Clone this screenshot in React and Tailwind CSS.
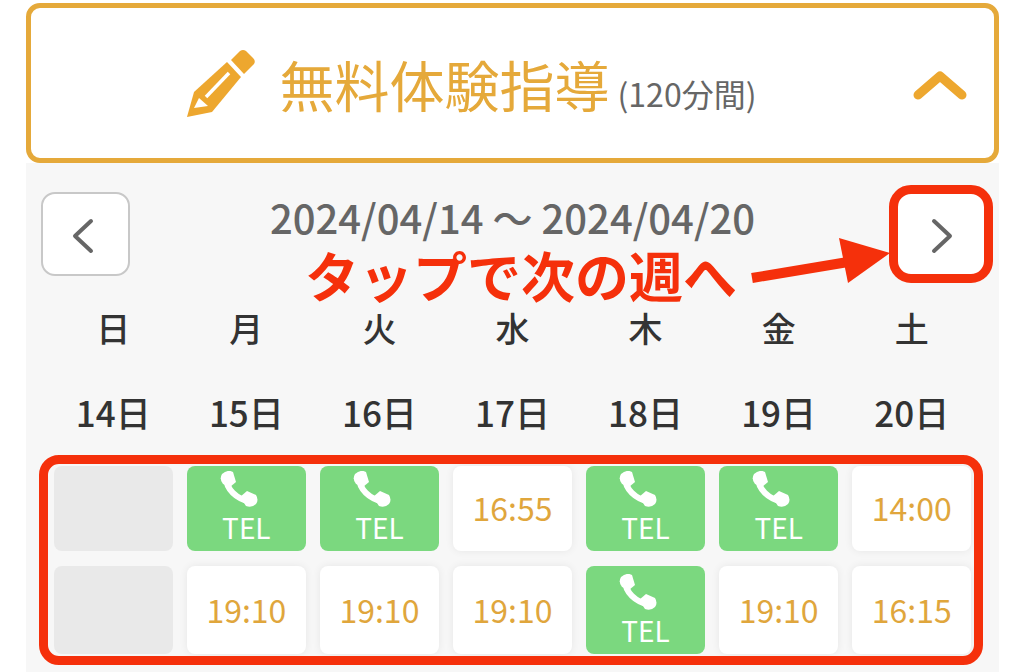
const JP = "font-['Noto_Sans_CJK_JP','Noto_Sans',sans-serif]";

const WEEK = ['日', '月', '火', '水', '木', '金', '土'];
const DATES = ['14日', '15日', '16日', '17日', '18日', '19日', '20日'];
const ROWS = [
  ['', 'TEL', 'TEL', '16:55', 'TEL', 'TEL', '14:00'],
  ['', '19:10', '19:10', '19:10', 'TEL', '19:10', '16:15'],
];

function PencilIcon() {
  return (
    <svg width="70" height="70" viewBox="0 0 70 70" className="mr-[23px] mt-[1px] shrink-0">
      <path d="M44 11 L53 2 Q56 0 59 2 L66 9 Q69 12 67 15 L57 25 Z" fill="#eda72f" />
      <path d="M40 13 L54 28 L25 63 L0 68 L7 43 Z" fill="#eda72f" />
      <path d="M19 48 L42 24" stroke="#fff" strokeWidth="3.5" />
      <path d="M7 59 L12 49 L21 57 Z" fill="#fff" />
    </svg>
  );
}

function PhoneIcon() {
  return (
    <svg width="38" height="36" viewBox="0 0 38 36" className="mb-[5px] -ml-[15px] shrink-0">
      <path d="M6 6 C6 18 16 28 31 31" fill="none" stroke="#fff" strokeWidth="6" strokeLinecap="round" />
      <path d="M2 3 Q8 -2 13 1 L16 11 L10 16 L3 13 Q-1 8 2 3 Z" fill="#fff" />
      <path d="M20 26 L27 20 L36 24 Q39 29 36 33 Q32 37 26 35 Z" fill="#fff" />
    </svg>
  );
}

function Chevron({ dir }) {
  return (
    <svg width="24" height="36" viewBox="0 0 24 36" className={dir === 'left' ? '-ml-[6px] mt-[4px]' : 'ml-[6px] mt-[4px]'}>
      <path
        d={dir === 'left' ? 'M20 3 L4 18 L20 33' : 'M4 3 L20 18 L4 33'}
        fill="none"
        stroke="#666"
        strokeWidth="4"
        strokeLinecap="round"
        strokeLinejoin="round"
      />
    </svg>
  );
}

function Cell({ value }) {
  if (value === '') return <div className="rounded-lg bg-[#e9e9e9]" />;
  if (value === 'TEL') {
    return (
      <div className="flex flex-col items-center justify-end rounded-lg bg-[#7bd87f] pb-[9px] text-white">
        <PhoneIcon />
        <span className="text-[28px] leading-[30px]">TEL</span>
      </div>
    );
  }
  return (
    <div className="flex items-center justify-center rounded-lg bg-white pb-[3px] text-[32px] text-[#e0a63c] shadow-[0_0_8px_rgba(0,0,0,0.07)]">
      {value}
    </div>
  );
}

export default function App() {
  return (
    <div className={`h-[672px] w-[1024px] overflow-hidden bg-white pl-[26px] pt-[3px] ${JP}`}>
      <div className="w-[973px]">
        {/* header */}
        <div className="relative flex h-[160px] items-center justify-center rounded-[14px] border-[5px] border-[#e5a93a] bg-white">
          <div className="flex items-center pr-[82px]">
            <PencilIcon />
            <span className="text-[55px] leading-none text-[#e5a93a]">無料体験指導</span>
            <span className="ml-[8px] mt-[20px] text-[32px] leading-none text-[#666]">(120分間)</span>
          </div>
          <svg width="56" height="34" viewBox="0 0 56 34" className="absolute right-[26px] top-[60px]">
            <path d="M6 27 L28 8 L50 27" fill="none" stroke="#eda72f" strokeWidth="9" strokeLinecap="round" strokeLinejoin="round" />
          </svg>
        </div>

        {/* calendar */}
        <div className="relative h-[509px] bg-[#f7f7f7] px-[28px] pt-[29px]">
          <div className="-mx-[13px] flex h-[84px] items-start justify-between">
            <button className="flex h-[84px] w-[89px] items-center justify-center rounded-[14px] border-2 border-[#c8c8c8] bg-white">
              <Chevron dir="left" />
            </button>
            <div className="-mt-[1px] text-[40px] font-medium leading-[52px] text-[#666]">2024/04/14 ～ 2024/04/20</div>
            <button className="flex h-[84px] w-[89px] items-center justify-center rounded-[14px] bg-white">
              <Chevron dir="right" />
            </button>
          </div>

          <div className="mt-[32px] grid h-10 grid-cols-7 gap-x-[14.5px] text-center text-[34px] font-medium leading-10 text-[#333]">
            {WEEK.map((d) => (
              <div key={d}>{d}</div>
            ))}
          </div>
          <div className="mt-[44px] grid h-10 grid-cols-7 gap-x-[14.5px] text-center text-[35px] font-medium leading-10 text-[#333]">
            {DATES.map((d) => (
              <div key={d}>{d}</div>
            ))}
          </div>
          <div className="mt-[34px] grid grid-cols-7 grid-rows-[85px_88px] gap-x-[14.5px] gap-y-[15px]">
            {ROWS.flat().map((v, i) => (
              <Cell key={i} value={v} />
            ))}
          </div>

          {/* red annotations on top */}
          <div className="absolute left-[279px] top-[84px] text-[54px] font-bold leading-[56px] text-[#f5300b]">タップで次の週へ</div>
          <svg width="150" height="60" viewBox="0 0 150 60" className="absolute left-[724px] top-[72px]">
            <path d="M2 43 L98 27" stroke="#f5300b" strokeWidth="10" />
            <path d="M89 3 L140 18 L98 48 Z" fill="#f5300b" />
          </svg>
          <div className="absolute left-[863px] top-[22px] h-[98px] w-[104px] rounded-[22px] border-[9px] border-[#f5300b]" />
          <div className="absolute left-[13px] top-[292px] h-[210px] w-[944px] rounded-[20px] border-[9px] border-[#f5300b]" />
        </div>
      </div>
    </div>
  );
}
